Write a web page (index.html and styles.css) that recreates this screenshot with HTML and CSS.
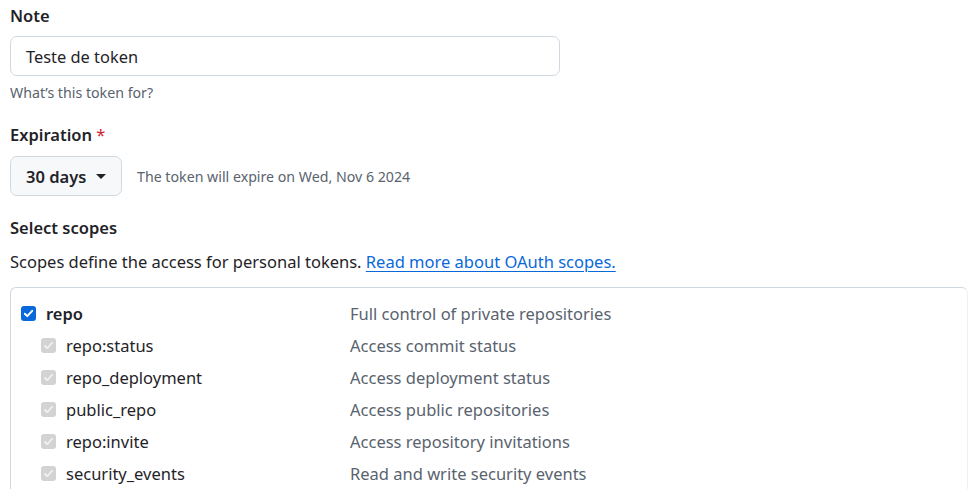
FILE: index.html
```html
<!DOCTYPE html>
<html>
<head>
<meta charset="utf-8">
<link rel="stylesheet" href="styles.css">
</head>
<body>
<div class="page">
  <div class="field">
    <label class="label">Note</label>
    <div class="input">Teste de token</div>
    <div class="hint">What’s this token for?</div>
  </div>
  <div class="field exp">
    <label class="label">Expiration <span class="req">*</span></label>
    <div class="exp-row">
      <button class="btn">30 days <span class="caret"></span></button>
      <span class="exp-note">The token will expire on Wed, Nov 6 2024</span>
    </div>
  </div>
  <div class="field scopes">
    <div class="label">Select scopes</div>
    <p class="desc">Scopes define the access for personal tokens. <a class="link">Read more about OAuth scopes.</a></p>
    <div class="table">
      <div class="row main">
        <span class="name"><span class="cb on"><svg viewBox="0 0 16 16" width="13" height="13"><path d="M3.5 8.3l3 3 6-6.6" fill="none" stroke="#fff" stroke-width="2.4" stroke-linecap="round" stroke-linejoin="round"/></svg></span><b>repo</b></span>
        <span class="d">Full control of private repositories</span>
      </div>
      <div class="row sub">
        <span class="name"><span class="cb off"><svg viewBox="0 0 16 16" width="13" height="13"><path d="M3.5 8.3l3 3 6-6.6" fill="none" stroke="#f4f4f4" stroke-width="2" stroke-linecap="round" stroke-linejoin="round"/></svg></span>repo:status</span>
        <span class="d">Access commit status</span>
      </div>
      <div class="row sub">
        <span class="name"><span class="cb off"><svg viewBox="0 0 16 16" width="13" height="13"><path d="M3.5 8.3l3 3 6-6.6" fill="none" stroke="#f4f4f4" stroke-width="2" stroke-linecap="round" stroke-linejoin="round"/></svg></span>repo_deployment</span>
        <span class="d">Access deployment status</span>
      </div>
      <div class="row sub">
        <span class="name"><span class="cb off"><svg viewBox="0 0 16 16" width="13" height="13"><path d="M3.5 8.3l3 3 6-6.6" fill="none" stroke="#f4f4f4" stroke-width="2" stroke-linecap="round" stroke-linejoin="round"/></svg></span>public_repo</span>
        <span class="d">Access public repositories</span>
      </div>
      <div class="row sub">
        <span class="name"><span class="cb off"><svg viewBox="0 0 16 16" width="13" height="13"><path d="M3.5 8.3l3 3 6-6.6" fill="none" stroke="#f4f4f4" stroke-width="2" stroke-linecap="round" stroke-linejoin="round"/></svg></span>repo:invite</span>
        <span class="d">Access repository invitations</span>
      </div>
      <div class="row sub">
        <span class="name"><span class="cb off"><svg viewBox="0 0 16 16" width="13" height="13"><path d="M3.5 8.3l3 3 6-6.6" fill="none" stroke="#f4f4f4" stroke-width="2" stroke-linecap="round" stroke-linejoin="round"/></svg></span>security_events</span>
        <span class="d">Read and write security events</span>
      </div>
    </div>
  </div>
</div>
</body>
</html>
```

FILE: styles.css
```css
* { box-sizing: border-box; }
html, body { margin: 0; padding: 0; background: #fff; }
body {
  font-family: "Noto Sans", "Open Sans", sans-serif;
  color: #1f2328;
  font-size: 16.5px;
  overflow: hidden;
}
.page { padding: 4px 0 0 10px; }
.label {
  display: block;
  font-weight: 600;
  font-size: 16.5px;
  line-height: 24px;
  color: #1f2328;
}
.req { color: #d1242f; font-weight: 400; }
.input {
  margin-top: 8px;
  width: 550px;
  height: 40px;
  border: 1px solid #d1d9e0;
  border-radius: 7px;
  padding: 0 15px;
  display: flex;
  align-items: center;
  font-size: 16.4px;
  color: #1f2328;
}
.hint {
  margin-top: 7px;
  font-size: 14.2px;
  line-height: 20px;
  color: #59636e;
}
.exp { margin-top: 20px; }
.exp-row {
  margin-top: 9px;
  display: flex;
  align-items: center;
  gap: 15px;
}
.btn {
  font-family: inherit;
  font-size: 16.5px;
  font-weight: 600;
  color: #1f2328;
  background: #f6f8fa;
  border: 1px solid #d1d9e0;
  border-radius: 7px;
  height: 40px;
  width: 112px;
  padding: 0 15px;
  display: flex;
  align-items: center;
  justify-content: space-between;
}
.caret {
  width: 0; height: 0;
  border-left: 5px solid transparent;
  border-right: 5px solid transparent;
  border-top: 5px solid #1f2328;
}
.exp-note { font-size: 14.2px; color: #59636e; }
.scopes { margin-top: 20px; }
.desc {
  margin: 11px 0 0;
  font-size: 16.5px;
  line-height: 22px;
}
.link {
  color: #0969da;
  text-decoration: underline;
  text-underline-offset: 3px;
}
.table {
  margin-top: 14px;
  width: 958px;
  border: 1px solid #d1d9e0;
  border-bottom: none;
  border-right-color: #eef1f4;
  border-radius: 6px 6px 0 0;
  padding: 10px 0 0 10px;
}
.row {
  display: grid;
  grid-template-columns: 329px 1fr;
  height: 32px;
  align-items: center;
  font-size: 16.5px;
}
.row.main { height: 31px; }
.name { display: flex; align-items: center; }
.sub .name { padding-left: 20px; }
.d { color: #59636e; }
.cb {
  width: 15px; height: 15px;
  border-radius: 3px;
  display: inline-flex;
  align-items: center;
  justify-content: center;
  margin-right: 10px;
}
.cb.on { background: #0969da; }
.cb.off { background: #d3d3d3; }
.main b { font-weight: 600; }
```
